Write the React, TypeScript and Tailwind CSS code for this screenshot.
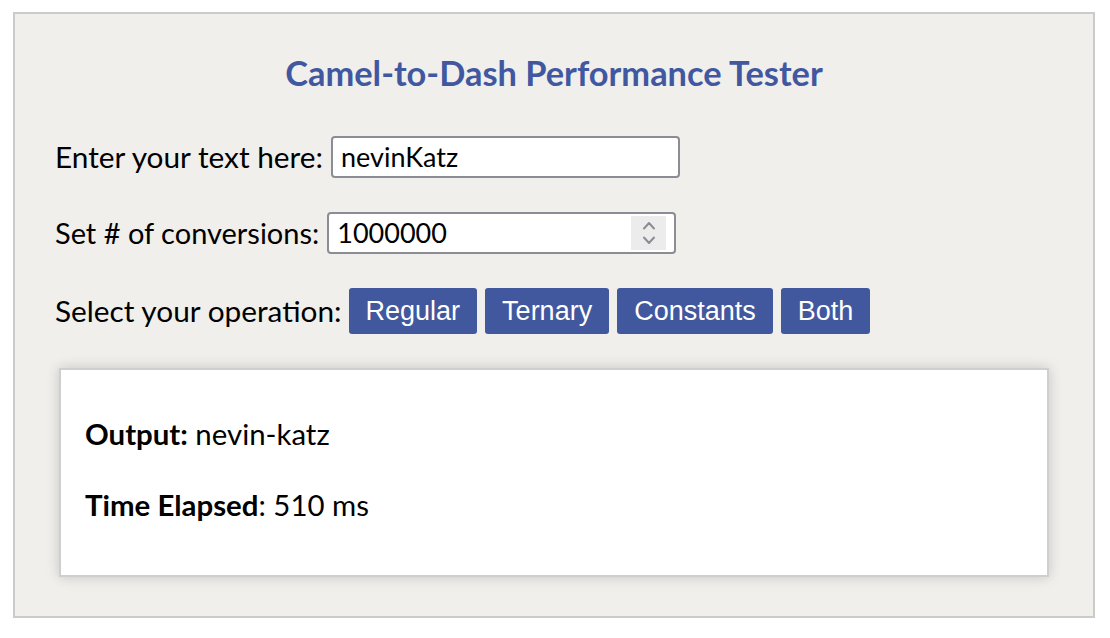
import React from "react";

const body = { fontFamily: "Lato, 'Noto Sans', sans-serif" };
const btnFont = { fontFamily: "'Liberation Sans', Arial, sans-serif" };

function Btn({ children }: { children: React.ReactNode }) {
  return (
    <button
      className="h-[46px] px-[17px] rounded-[3px] bg-[#42589e] text-white text-[27px] leading-none"
      style={btnFont}
    >
      {children}
    </button>
  );
}

export default function App() {
  return (
    <div className="w-[1110px] h-[638px] bg-white pt-[12px] pl-[13px]" style={body}>
      <div className="w-[1082px] h-[606px] border-2 border-[#cbcbcb] bg-[#f0efec] flex flex-col">
        <h1 className="mt-[38px] h-[42px] leading-[42px] text-center text-[34.4px] font-bold text-[#4158a0]">
          Camel-to-Dash Performance Tester
        </h1>
        <div className="mt-[42px] pl-[40px] flex items-center h-[42px] text-[29.8px] text-black">
          <span>Enter your text here:</span>
          <div className="ml-[8px] w-[349px] h-[42px] border-2 border-[#8c8c94] rounded-[4px] bg-white flex items-center pl-[8px] text-[27px]">
            <span>nevinKatz</span>
          </div>
        </div>
        <div className="mt-[34px] pl-[40px] flex items-center h-[42px] text-[29px] text-black">
          <span>Set # of conversions:</span>
          <div className="ml-[8px] w-[349px] h-[42px] border-2 border-[#8c8c94] rounded-[4px] bg-white flex items-center pl-[8px] pr-[8px] text-[27px]">
            <span className="flex-1">1000000</span>
            <div className="w-[35px] h-[34px] bg-[#ececec] flex flex-col items-center justify-center gap-[6px]">
              <svg width="14" height="9" viewBox="0 0 14 9">
                <path d="M2 7.5 L7 2 L12 7.5" fill="none" stroke="#8c8c94" strokeWidth="2" strokeLinecap="round" strokeLinejoin="round" />
              </svg>
              <svg width="14" height="9" viewBox="0 0 14 9">
                <path d="M2 1.5 L7 7 L12 1.5" fill="none" stroke="#8c8c94" strokeWidth="2" strokeLinecap="round" strokeLinejoin="round" />
              </svg>
            </div>
          </div>
        </div>
        <div className="mt-[34px] pl-[40px] flex items-center h-[46px] text-[29.8px] text-black">
          <span className="mr-[7px]">Select your operation:</span>
          <div className="flex gap-[8px]">
            <Btn>Regular</Btn>
            <Btn>Ternary</Btn>
            <Btn>Constants</Btn>
            <Btn>Both</Btn>
          </div>
        </div>
        <div className="mt-[34px] ml-[44px] w-[990px] h-[209px] bg-white border-2 border-[#cfcfcf] shadow-[0_0_12px_rgba(0,0,0,0.18)] pl-[24px] pt-[46px] text-[29.4px] text-black">
          <div className="h-[36px] leading-[36px]">
            <span className="font-bold">Output:</span> nevin-katz
          </div>
          <div className="mt-[35px] h-[36px] leading-[36px]">
            <span className="font-bold">Time Elapsed</span>: 510 ms
          </div>
        </div>
      </div>
    </div>
  );
}
